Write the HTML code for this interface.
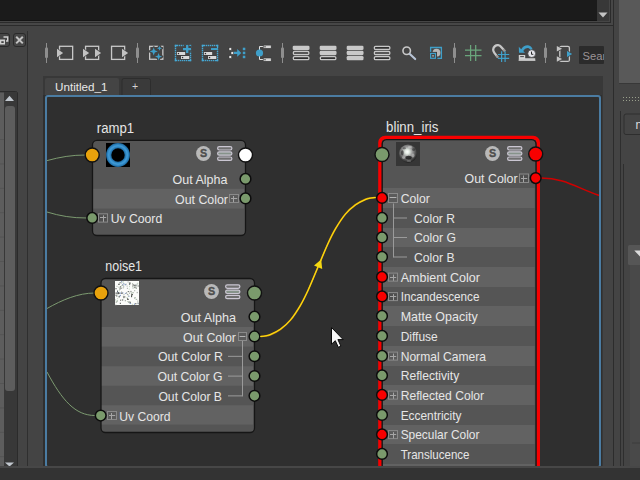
<!DOCTYPE html>
<html><head><meta charset="utf-8"><title>Node Editor</title>
<style>html,body{margin:0;padding:0;background:#444444;overflow:hidden}svg{display:block;font-family:"Liberation Sans",sans-serif}text{white-space:pre}</style></head><body>
<svg width="640" height="480" viewBox="0 0 640 480">
<rect width="640" height="480" fill="#444444"/>
<rect x="0" y="0" width="597" height="21" fill="#1b1b1b"/>
<rect x="597" y="0" width="12" height="21" fill="#383838"/>
<rect x="0" y="20" width="597" height="1" fill="#151515"/>
<path d="M598.5 12.5H607.5L603 17.5Z" fill="#c4c4c4"/>
<rect x="611" y="0" width="2" height="25" fill="#474747"/>
<rect x="0" y="23" width="613" height="2" fill="#474747"/>
<rect x="610" y="0" width="1" height="23" fill="#2b2b2b"/>
<rect x="0" y="22" width="611" height="1" fill="#2b2b2b"/>
<rect x="609" y="0" width="1" height="22" fill="#464646"/>
<rect x="0" y="21" width="610" height="1" fill="#464646"/>
<rect x="0" y="25" width="614" height="1" fill="#2b2b2b"/>
<rect x="613" y="0" width="1" height="466" fill="#2c2c2c"/>
<rect x="619" y="0" width="21" height="83" fill="#595959"/>
<rect x="619" y="83" width="21" height="1" fill="#383838"/>
<rect x="623" y="97" width="1" height="1" fill="#9aa08c"/>
<rect x="626" y="97" width="1" height="1" fill="#9aa08c"/>
<rect x="629" y="97" width="1" height="1" fill="#9aa08c"/>
<rect x="632" y="97" width="1" height="1" fill="#9aa08c"/>
<rect x="635" y="97" width="1" height="1" fill="#9aa08c"/>
<rect x="638" y="97" width="1" height="1" fill="#9aa08c"/>
<rect x="623" y="100" width="1" height="1" fill="#9aa08c"/>
<rect x="626" y="100" width="1" height="1" fill="#9aa08c"/>
<rect x="629" y="100" width="1" height="1" fill="#9aa08c"/>
<rect x="632" y="100" width="1" height="1" fill="#9aa08c"/>
<rect x="635" y="100" width="1" height="1" fill="#9aa08c"/>
<rect x="638" y="100" width="1" height="1" fill="#9aa08c"/>
<rect x="620" y="111" width="1" height="355" fill="#2e2e2e"/>
<rect x="623" y="164" width="1" height="302" fill="#2e2e2e"/>
<rect x="630" y="262" width="10" height="204" fill="#494949"/>
<path d="M624.5 640V116.5Q624.5 114.5 626.5 114.5H640" fill="none"/>
<rect x="624" y="114" width="20" height="20.5" rx="2" fill="#444" stroke="#2e2e2e" stroke-width="1"/>
<text x="635.5" y="129" font-size="12" fill="#ddd" text-anchor="start">n</text>
<rect x="628" y="245" width="16" height="20" rx="1.5" fill="#565656"/>
<path d="M634.3 250.6H642V258.6Z" fill="#dcdcdc"/>
<rect x="632" y="442.5" width="8" height="1" fill="#3c3c3c"/>
<rect x="27" y="31" width="1" height="435" fill="#2f2f2f"/>
<rect x="-3.5" y="33.5" width="13" height="13" rx="2.5" fill="#464646" stroke="#2a2a2a" stroke-width="1"/>
<rect x="13.5" y="33.5" width="12" height="13" rx="2.5" fill="#464646" stroke="#2a2a2a" stroke-width="1"/>
<path d="M16.2 36.8L22.8 43.4M22.8 36.8L16.2 43.4" stroke="#c2c2c2" stroke-width="2" fill="none"/>
<path d="M3.5 37H7.7V41H6" stroke="#d0d0d0" stroke-width="1.4" fill="none"/>
<rect x="0" y="39.5" width="5" height="5" fill="#d0d0d0"/>
<rect x="1.3" y="41.3" width="2.4" height="1.6" fill="#333"/>
<path d="M0 91.5H15.5Q17.5 91.5 17.5 93.5V466" fill="#383838" stroke="#2b2b2b" stroke-width="1"/>
<rect x="0" y="92" width="17" height="374" fill="#383838"/>
<rect x="17" y="93" width="1" height="373" fill="#2b2b2b"/>
<rect x="0" y="92.5" width="4" height="373.5" fill="#5d5d5d"/>
<rect x="0" y="139.0" width="4" height="1" fill="#545454"/>
<rect x="0" y="163.4" width="4" height="1" fill="#545454"/>
<rect x="0" y="187.8" width="4" height="1" fill="#545454"/>
<rect x="0" y="212.2" width="4" height="1" fill="#545454"/>
<rect x="0" y="236.6" width="4" height="1" fill="#545454"/>
<rect x="0" y="261.0" width="4" height="1" fill="#545454"/>
<rect x="0" y="285.4" width="4" height="1" fill="#545454"/>
<rect x="0" y="309.8" width="4" height="1" fill="#545454"/>
<rect x="0" y="334.2" width="4" height="1" fill="#545454"/>
<rect x="0" y="358.6" width="4" height="1" fill="#545454"/>
<rect x="0" y="383.0" width="4" height="1" fill="#545454"/>
<rect x="0" y="407.4" width="4" height="1" fill="#545454"/>
<rect x="0" y="431.8" width="4" height="1" fill="#545454"/>
<rect x="0" y="456.2" width="4" height="1" fill="#545454"/>
<path d="M5 101L9.5 95.8L14 101Z" fill="#c2c8cf"/>
<rect x="5" y="106" width="10" height="285" rx="3" fill="#5d5d5d"/>
<path d="M5 462.5H14L9.5 466.5Z" fill="#c2c8cf"/>
<rect x="46.0" y="43" width="1" height="20" fill="#8e8e8e"/>
<rect x="45.0" y="47.5" width="3" height="10.5" rx="1" fill="#8e8e8e"/>
<rect x="137.0" y="43" width="1" height="20" fill="#8e8e8e"/>
<rect x="136.0" y="47.5" width="3" height="10.5" rx="1" fill="#8e8e8e"/>
<rect x="282.0" y="43" width="1" height="20" fill="#8e8e8e"/>
<rect x="281.0" y="47.5" width="3" height="10.5" rx="1" fill="#8e8e8e"/>
<rect x="454.0" y="43" width="1" height="20" fill="#8e8e8e"/>
<rect x="453.0" y="47.5" width="3" height="10.5" rx="1" fill="#8e8e8e"/>
<rect x="545.0" y="43" width="1" height="20" fill="#8e8e8e"/>
<rect x="544.0" y="47.5" width="3" height="10.5" rx="1" fill="#8e8e8e"/>
<rect x="59.55" y="46.3" width="13.1" height="13.1" fill="none" stroke="#c8c8c8" stroke-width="1.3"/>
<path d="M55.8 47.199999999999996L64.7 53L55.8 58.800000000000004Z" fill="#444444"/>
<path d="M57 48.8L63.1 53L57 57.2Z" fill="#c2c2c2"/>
<rect x="85.55" y="46.3" width="13.1" height="13.1" fill="none" stroke="#c8c8c8" stroke-width="1.3"/>
<path d="M81.8 47.199999999999996L90.69999999999999 53L81.8 58.800000000000004Z" fill="#444444"/>
<path d="M83 48.8L89.1 53L83 57.2Z" fill="#c2c2c2"/>
<path d="M93.8 47.199999999999996L102.69999999999999 53L93.8 58.800000000000004Z" fill="#444444"/>
<path d="M95 48.8L101.1 53L95 57.2Z" fill="#c2c2c2"/>
<rect x="111.55" y="46.3" width="13.1" height="13.1" fill="none" stroke="#c8c8c8" stroke-width="1.3"/>
<path d="M120.8 47.199999999999996L129.7 53L120.8 58.800000000000004Z" fill="#444444"/>
<path d="M122 48.8L128.1 53L122 57.2Z" fill="#c2c2c2"/>
<rect x="149.65" y="46.35" width="13.2" height="12.9" fill="none" stroke="#c8c8c8" stroke-width="1.3"/>
<path d="M153.7 47.4L154.78 50.32L157.7 51.4L154.78 52.48L153.7 55.4L152.61999999999998 52.48L149.7 51.4L152.61999999999998 50.32Z" fill="#444444" stroke="#444444" stroke-width="2.4" stroke-linejoin="round"/>
<path d="M153.7 47.4L154.78 50.32L157.7 51.4L154.78 52.48L153.7 55.4L152.61999999999998 52.48L149.7 51.4L152.61999999999998 50.32Z" fill="#3f9fc9"/>
<path d="M159.5 45.7L160.175 47.525000000000006L162.0 48.2L160.175 48.875L159.5 50.7L158.825 48.875L157.0 48.2L158.825 47.525000000000006Z" fill="#444444" stroke="#444444" stroke-width="2.4" stroke-linejoin="round"/>
<path d="M159.5 45.7L160.175 47.525000000000006L162.0 48.2L160.175 48.875L159.5 50.7L158.825 48.875L157.0 48.2L158.825 47.525000000000006Z" fill="#3f9fc9"/>
<path d="M158.6 53.0L159.572 55.628L162.2 56.6L159.572 57.572L158.6 60.2L157.628 57.572L155.0 56.6L157.628 55.628Z" fill="#444444" stroke="#444444" stroke-width="2.4" stroke-linejoin="round"/>
<path d="M158.6 53.0L159.572 55.628L162.2 56.6L159.572 57.572L158.6 60.2L157.628 57.572L155.0 56.6L157.628 55.628Z" fill="#3f9fc9"/>
<rect x="174.8" y="44.8" width="2.4" height="1.4" fill="#45a8d4"/>
<rect x="174.8" y="44.8" width="1.4" height="2.4" fill="#45a8d4"/>
<rect x="188.8" y="44.8" width="2.4" height="1.4" fill="#45a8d4"/>
<rect x="189.8" y="44.8" width="1.4" height="2.4" fill="#45a8d4"/>
<rect x="174.8" y="59.8" width="2.4" height="1.4" fill="#45a8d4"/>
<rect x="174.8" y="58.8" width="1.4" height="2.4" fill="#45a8d4"/>
<rect x="188.8" y="59.8" width="2.4" height="1.4" fill="#45a8d4"/>
<rect x="189.8" y="58.8" width="1.4" height="2.4" fill="#45a8d4"/>
<rect x="176.8" y="44.8" width="1.4" height="1.4" fill="#45a8d4"/>
<rect x="177.8" y="59.8" width="1.4" height="1.4" fill="#45a8d4"/>
<rect x="174.8" y="47.8" width="1.4" height="1.4" fill="#45a8d4"/>
<rect x="189.8" y="46.8" width="1.4" height="1.4" fill="#45a8d4"/>
<rect x="178.8" y="44.8" width="1.4" height="1.4" fill="#45a8d4"/>
<rect x="179.8" y="59.8" width="1.4" height="1.4" fill="#45a8d4"/>
<rect x="174.8" y="49.8" width="1.4" height="1.4" fill="#45a8d4"/>
<rect x="189.8" y="48.8" width="1.4" height="1.4" fill="#45a8d4"/>
<rect x="180.8" y="44.8" width="1.4" height="1.4" fill="#45a8d4"/>
<rect x="181.8" y="59.8" width="1.4" height="1.4" fill="#45a8d4"/>
<rect x="174.8" y="51.8" width="1.4" height="1.4" fill="#45a8d4"/>
<rect x="189.8" y="50.8" width="1.4" height="1.4" fill="#45a8d4"/>
<rect x="182.8" y="44.8" width="1.4" height="1.4" fill="#45a8d4"/>
<rect x="183.8" y="59.8" width="1.4" height="1.4" fill="#45a8d4"/>
<rect x="174.8" y="53.8" width="1.4" height="1.4" fill="#45a8d4"/>
<rect x="189.8" y="52.8" width="1.4" height="1.4" fill="#45a8d4"/>
<rect x="184.8" y="44.8" width="1.4" height="1.4" fill="#45a8d4"/>
<rect x="185.8" y="59.8" width="1.4" height="1.4" fill="#45a8d4"/>
<rect x="174.8" y="55.8" width="1.4" height="1.4" fill="#45a8d4"/>
<rect x="189.8" y="54.8" width="1.4" height="1.4" fill="#45a8d4"/>
<rect x="186.8" y="44.8" width="1.4" height="1.4" fill="#45a8d4"/>
<rect x="187.8" y="59.8" width="1.4" height="1.4" fill="#45a8d4"/>
<rect x="174.8" y="57.8" width="1.4" height="1.4" fill="#45a8d4"/>
<rect x="189.8" y="56.8" width="1.4" height="1.4" fill="#45a8d4"/>
<rect x="176.4" y="51.5" width="9.3" height="4" fill="#3a3a3a"/>
<rect x="180.5" y="55.5" width="9.3" height="4" fill="#3a3a3a"/>
<rect x="176.9" y="52" width="8.3" height="3" fill="#d8d8d8"/>
<rect x="177.8" y="52.9" width="1.3" height="1.3" fill="#2c2c2c"/>
<rect x="181" y="56" width="8.3" height="3" fill="#d8d8d8"/>
<rect x="181.9" y="56.9" width="1.3" height="1.3" fill="#2c2c2c"/>
<rect x="183.7" y="44.5" width="7.8" height="7.3" fill="#444444"/>
<path d="M183 49.05H191M187.2 45V53" stroke="#3f9fc9" stroke-width="2.3" fill="none"/>
<rect x="189.3" y="45" width="1.7" height="1" fill="#3f9fc9"/>
<rect x="201.8" y="44.8" width="2.4" height="1.4" fill="#45a8d4"/>
<rect x="201.8" y="44.8" width="1.4" height="2.4" fill="#45a8d4"/>
<rect x="215.8" y="44.8" width="2.4" height="1.4" fill="#45a8d4"/>
<rect x="216.8" y="44.8" width="1.4" height="2.4" fill="#45a8d4"/>
<rect x="201.8" y="59.8" width="2.4" height="1.4" fill="#45a8d4"/>
<rect x="201.8" y="58.8" width="1.4" height="2.4" fill="#45a8d4"/>
<rect x="215.8" y="59.8" width="2.4" height="1.4" fill="#45a8d4"/>
<rect x="216.8" y="58.8" width="1.4" height="2.4" fill="#45a8d4"/>
<rect x="203.8" y="44.8" width="1.4" height="1.4" fill="#45a8d4"/>
<rect x="204.8" y="59.8" width="1.4" height="1.4" fill="#45a8d4"/>
<rect x="201.8" y="47.8" width="1.4" height="1.4" fill="#45a8d4"/>
<rect x="216.8" y="46.8" width="1.4" height="1.4" fill="#45a8d4"/>
<rect x="205.8" y="44.8" width="1.4" height="1.4" fill="#45a8d4"/>
<rect x="206.8" y="59.8" width="1.4" height="1.4" fill="#45a8d4"/>
<rect x="201.8" y="49.8" width="1.4" height="1.4" fill="#45a8d4"/>
<rect x="216.8" y="48.8" width="1.4" height="1.4" fill="#45a8d4"/>
<rect x="207.8" y="44.8" width="1.4" height="1.4" fill="#45a8d4"/>
<rect x="208.8" y="59.8" width="1.4" height="1.4" fill="#45a8d4"/>
<rect x="201.8" y="51.8" width="1.4" height="1.4" fill="#45a8d4"/>
<rect x="216.8" y="50.8" width="1.4" height="1.4" fill="#45a8d4"/>
<rect x="209.8" y="44.8" width="1.4" height="1.4" fill="#45a8d4"/>
<rect x="210.8" y="59.8" width="1.4" height="1.4" fill="#45a8d4"/>
<rect x="201.8" y="53.8" width="1.4" height="1.4" fill="#45a8d4"/>
<rect x="216.8" y="52.8" width="1.4" height="1.4" fill="#45a8d4"/>
<rect x="211.8" y="44.8" width="1.4" height="1.4" fill="#45a8d4"/>
<rect x="212.8" y="59.8" width="1.4" height="1.4" fill="#45a8d4"/>
<rect x="201.8" y="55.8" width="1.4" height="1.4" fill="#45a8d4"/>
<rect x="216.8" y="54.8" width="1.4" height="1.4" fill="#45a8d4"/>
<rect x="213.8" y="44.8" width="1.4" height="1.4" fill="#45a8d4"/>
<rect x="214.8" y="59.8" width="1.4" height="1.4" fill="#45a8d4"/>
<rect x="201.8" y="57.8" width="1.4" height="1.4" fill="#45a8d4"/>
<rect x="216.8" y="56.8" width="1.4" height="1.4" fill="#45a8d4"/>
<rect x="203.4" y="51.5" width="9.3" height="4" fill="#3a3a3a"/>
<rect x="207.5" y="55.5" width="9.3" height="4" fill="#3a3a3a"/>
<rect x="203.9" y="52" width="8.3" height="3" fill="#d8d8d8"/>
<rect x="204.8" y="52.9" width="1.3" height="1.3" fill="#2c2c2c"/>
<rect x="208" y="56" width="8.3" height="3" fill="#d8d8d8"/>
<rect x="208.9" y="56.9" width="1.3" height="1.3" fill="#2c2c2c"/>
<rect x="210" y="47.3" width="7" height="3.5" fill="#444444"/>
<path d="M211 49.05H218" stroke="#3f9fc9" stroke-width="2" fill="none"/>
<rect x="229" y="47.7" width="2.6" height="2.6" fill="#e4e4e4" stroke="#333" stroke-width="0.5"/>
<rect x="231" y="51.7" width="2.6" height="2.6" fill="#e4e4e4" stroke="#333" stroke-width="0.5"/>
<rect x="229" y="55.7" width="2.6" height="2.6" fill="#e4e4e4" stroke="#333" stroke-width="0.5"/>
<rect x="242.8" y="47.7" width="2.5" height="2.5" fill="#3f9fc9"/>
<rect x="242.8" y="51.7" width="2.5" height="2.5" fill="#3f9fc9"/>
<rect x="242.8" y="55.7" width="2.5" height="2.5" fill="#3f9fc9"/>
<path d="M233.8 51.8H237.2V49L241.3 52.9L237.2 56.8V54H233.8Z" fill="#3f9fc9"/>
<path d="M263.5 46.5H259.5V59.5H263.5" stroke="#e0e0e0" stroke-width="1" fill="none"/>
<circle cx="259.5" cy="53" r="3.6" fill="#3f9fc9"/>
<rect x="263.2" y="45.1" width="8" height="3.3" fill="#d6d6d6" stroke="#333" stroke-width="0.6"/>
<rect x="264.4" y="46.199999999999996" width="1.2" height="1.2" fill="#333"/>
<rect x="263.2" y="58.0" width="8" height="3.3" fill="#d6d6d6" stroke="#333" stroke-width="0.6"/>
<rect x="264.4" y="59.099999999999994" width="1.2" height="1.2" fill="#333"/>
<rect x="292.7" y="45.7" width="16.8" height="4.3" rx="1.3" fill="#c8c8c8"/>
<rect x="293.35" y="51.5" width="15.5" height="3" rx="1.2" fill="#303030" stroke="#c8c8c8" stroke-width="1.3"/>
<rect x="293.35" y="56.65" width="15.5" height="3" rx="1.2" fill="#303030" stroke="#c8c8c8" stroke-width="1.3"/>
<rect x="319.7" y="45.7" width="16.8" height="4.3" rx="1.3" fill="#c8c8c8"/>
<rect x="319.7" y="50.85" width="16.8" height="4.3" rx="1.3" fill="#c8c8c8"/>
<rect x="320.35" y="56.65" width="15.5" height="3" rx="1.2" fill="#303030" stroke="#c8c8c8" stroke-width="1.3"/>
<rect x="346.7" y="45.7" width="16.8" height="4.3" rx="1.3" fill="#c8c8c8"/>
<rect x="346.7" y="50.85" width="16.8" height="4.3" rx="1.3" fill="#c8c8c8"/>
<rect x="346.7" y="56.0" width="16.8" height="4.3" rx="1.3" fill="#c8c8c8"/>
<rect x="374.35" y="46.35" width="15.5" height="3" rx="1.2" fill="#303030" stroke="#c8c8c8" stroke-width="1.3"/>
<rect x="374.35" y="51.5" width="15.5" height="3" rx="1.2" fill="#303030" stroke="#c8c8c8" stroke-width="1.3"/>
<rect x="374.35" y="56.65" width="15.5" height="3" rx="1.2" fill="#303030" stroke="#c8c8c8" stroke-width="1.3"/>
<circle cx="406.7" cy="50.7" r="3.75" fill="none" stroke="#c8c8c8" stroke-width="1.6"/>
<path d="M409.8 53.9L415.2 59.1" stroke="#b8c4d6" stroke-width="2.1" stroke-linecap="round" fill="none"/>
<path d="M437.4 58.3H441.4V47.5H430.6V52.6" fill="none" stroke="#3f9fc9" stroke-width="1.3"/>
<circle cx="436.5" cy="52.7" r="3.9" fill="#b6b6b6"/>
<rect x="429.9" y="51.9" width="7.1" height="7.1" fill="#3a3a3a"/>
<rect x="430.6" y="53.4" width="4.9" height="4.9" fill="#444444" stroke="#3f9fc9" stroke-width="1.2"/>
<rect x="432.3" y="55.1" width="1.5" height="1.5" fill="#b4b4b4"/>
<path d="M470.6 45V61M475.7 45V61M465 50.1H481.5M465 55.6H481.5" stroke="#6aa67c" stroke-width="1.25" fill="none"/>
<path d="M498 57.6L494.2 52.6A4.5 4.5 0 0 1 501.2 46.9L505 51.2" stroke="#c6c6c6" stroke-width="2.3" fill="none"/>
<path d="M496.3 55.4L498 57.6M503.3 49.3L505 51.2" stroke="#777" stroke-width="2.3" fill="none" opacity="0.55"/>
<path d="M501.6 51.3V62M505.1 51.3V62M498 54.5H509.2M498 58.4H509.2" stroke="#3f9fc9" stroke-width="1.2" fill="none"/>
<path d="M518.8 55H525.2V58.2H535.2V61H518.8Z" fill="#d2d2d2"/>
<rect x="520.2" y="56.2" width="3.7" height="0.9" fill="#3a3a3a"/>
<rect x="518.8" y="59.6" width="16.4" height="1.4" fill="#bdbdbd"/>
<path d="M518.8 46.8L519 52.8H525L523.2 51Q525 47.6 528.3 48.1Q530 48.6 530.6 50.6L532.6 49.2Q531.5 45.6 528 45.2Q523.6 45 521.2 49.2Z" fill="#3f9fc9"/>
<circle cx="531.7" cy="53.6" r="3.9" fill="#e4e4ea" stroke="#3c3c3c" stroke-width="0.7"/>
<path d="M531.5 51.6V54.3H533.3" stroke="#2a2a2a" stroke-width="1" fill="none"/>
<rect x="559.8" y="46.3" width="9.6" height="15.1" rx="1.5" fill="none" stroke="#c8c8c8" stroke-width="1.3"/>
<rect x="556" y="50.5" width="6" height="6" fill="#444444" opacity="0"/>
<path d="M555.5999999999999 44.4L563.6999999999999 48.7L555.5999999999999 53.00000000000001Z" fill="#444444"/>
<path d="M556.8 46.0L562.0999999999999 48.7L556.8 51.400000000000006Z" fill="#c4c4c4"/>
<path d="M555.5999999999999 54.699999999999996L563.6999999999999 59L555.5999999999999 63.300000000000004Z" fill="#444444"/>
<path d="M556.8 56.3L562.0999999999999 59L556.8 61.7Z" fill="#c4c4c4"/>
<path d="M565.8 49.4L573.8000000000001 54L565.8 58.6Z" fill="#444444"/>
<path d="M567 51L572.2 54L567 57Z" fill="#3f9fc9"/>
<rect x="579" y="46" width="25" height="18" rx="1" fill="#2b2b2b"/>
<svg x="579" y="46" width="25" height="18" viewBox="579 46 25 18">
<text x="582.6" y="60.1" font-size="11.2" fill="#9c9497" text-anchor="start">Search</text>
</svg>
<rect x="43" y="76" width="560" height="390" fill="#383838"/>
<path d="M45 96V80Q45 78 47 78H117Q119 78 119 80V96Z" fill="#444"/>
<path d="M122 96V80.5Q122 78.5 124 78.5H148.5Q150.5 78.5 150.5 80.5V96" fill="#3a3a3a" stroke="#2d2d2d" stroke-width="1"/>
<text x="55" y="91" font-size="11.5" fill="#e8e8e8" text-anchor="start" textLength="52.5" lengthAdjust="spacingAndGlyphs">Untitled_1</text>
<text x="135" y="90" font-size="10.5" fill="#d4d4d4" text-anchor="middle">+</text>
<rect x="43" y="95" width="559" height="371" fill="#2f2f2f"/>
<rect x="46" y="96" width="554" height="371" rx="2" fill="#2f2f2f" stroke="#4b7ca2" stroke-width="2"/>
<clipPath id="cv"><rect x="47" y="97" width="552" height="369"/></clipPath>
<g clip-path="url(#cv)">
<path d="M47 160.6C60 157 72 155 86 155" stroke="#7c9a70" stroke-width="1" fill="none"/>
<path d="M47 212C60 216 72 218 87 218" stroke="#7c9a70" stroke-width="1" fill="none"/>
<path d="M47 308.5C62 300 78 293 95 293" stroke="#7c9a70" stroke-width="1" fill="none"/>
<path d="M47 372C62 400 75 415.5 95 415.5" stroke="#7c9a70" stroke-width="1" fill="none"/>
<text x="96.8" y="132.6" font-size="14" fill="#e6e6e6" text-anchor="start" textLength="37.2" lengthAdjust="spacingAndGlyphs">ramp1</text>
<clipPath id="c92"><rect x="92.5" y="140.3" width="153.0" height="95.19999999999999" rx="4.5"/></clipPath>
<g clip-path="url(#c92)">
<rect x="92.5" y="140.3" width="153.0" height="95.19999999999999" fill="#555555"/>
<rect x="92.5" y="188.8" width="151.7" height="19.799999999999983" fill="#626262"/>
</g>
<rect x="92.5" y="140.3" width="153.0" height="95.19999999999999" rx="4.5" fill="none" stroke="#161616" stroke-width="1.3"/>
<rect x="106" y="143" width="24" height="24" fill="#000"/>
<circle cx="118" cy="155" r="9.3" fill="none" stroke="#2270a8" stroke-width="5.2"/>
<circle cx="118" cy="155" r="9.3" fill="none" stroke="#2f86c2" stroke-width="3.4"/>
<circle cx="118" cy="155" r="9.3" fill="none" stroke="#3f98d4" stroke-width="1.6"/>
<circle cx="203.5" cy="153.5" r="7.4" fill="#b9b9b9"/>
<text x="203.5" y="157.2" font-size="10.8" font-weight="bold" fill="#4e4e4e" stroke="#4e4e4e" stroke-width="0.35" text-anchor="middle">S</text>
<rect x="217.6" y="146.6" width="14.3" height="3.4" rx="1.7" fill="#6f6f6f" stroke="#cac6d2" stroke-width="1.2"/>
<rect x="217.6" y="151.79999999999998" width="14.3" height="3.4" rx="1.7" fill="#86938a" stroke="#cac6d2" stroke-width="1.2"/>
<rect x="217.6" y="157.0" width="14.3" height="3.4" rx="1.7" fill="#6f6f6f" stroke="#cac6d2" stroke-width="1.2"/>
<circle cx="92.2" cy="155" r="7" fill="#e8a20c" stroke="#111" stroke-width="1.4"/>
<circle cx="245.5" cy="155" r="7" fill="#ffffff" stroke="#111" stroke-width="1.4"/>
<text x="227.5" y="184" font-size="13" fill="#e6e6e6" text-anchor="end" textLength="55" lengthAdjust="spacingAndGlyphs">Out Alpha</text>
<circle cx="245.5" cy="178.9" r="5.35" fill="#7a9a6c" stroke="#0c0c0c" stroke-width="1.5"/>
<text x="228" y="203.7" font-size="13" fill="#e6e6e6" text-anchor="end" textLength="53" lengthAdjust="spacingAndGlyphs">Out Color</text>
<rect x="229.5" y="194.5" width="9" height="8" fill="#000" fill-opacity="0.07" stroke="#8a8a8a" stroke-width="1"/>
<path d="M231 198.5H237.2M233.5 196V202.2" stroke="#a6a6a6" stroke-width="1" fill="none"/>
<circle cx="245.5" cy="198.4" r="5.35" fill="#7a9a6c" stroke="#0c0c0c" stroke-width="1.5"/>
<circle cx="92.2" cy="217.9" r="5.35" fill="#7a9a6c" stroke="#0c0c0c" stroke-width="1.5"/>
<rect x="98.5" y="213.8" width="9" height="8.3" fill="#000" fill-opacity="0.07" stroke="#8a8a8a" stroke-width="1"/>
<path d="M100 217.5H106.2M103.5 215.3V221.8" stroke="#a6a6a6" stroke-width="1" fill="none"/>
<text x="110.7" y="223.3" font-size="13" fill="#e6e6e6" text-anchor="start" textLength="51.5" lengthAdjust="spacingAndGlyphs">Uv Coord</text>
<text x="105.3" y="271" font-size="14" fill="#e6e6e6" text-anchor="start" textLength="36.7" lengthAdjust="spacingAndGlyphs">noise1</text>
<clipPath id="c101"><rect x="101" y="278.5" width="153.5" height="154.0" rx="4.5"/></clipPath>
<g clip-path="url(#c101)">
<rect x="101" y="278.5" width="153.5" height="154.0" fill="#555555"/>
<rect x="101" y="327" width="152.2" height="19.600000000000023" fill="#626262"/>
<rect x="101" y="366.2" width="152.2" height="19.600000000000023" fill="#626262"/>
<rect x="101" y="405.2" width="152.2" height="19.400000000000034" fill="#626262"/>
</g>
<rect x="101" y="278.5" width="153.5" height="154.0" rx="4.5" fill="none" stroke="#161616" stroke-width="1.3"/>
<rect x="115" y="281" width="24" height="24" fill="#fbfcfa"/>
<rect x="122.4" y="284.5" width="1" height="1.3" fill="#6a706a"/>
<rect x="117.2" y="294.4" width="1" height="1" fill="#a8b4a8"/>
<rect x="117.0" y="290.6" width="1" height="1.3" fill="#505450"/>
<rect x="124.8" y="300.0" width="1" height="1.3" fill="#9aa09a"/>
<rect x="129.4" y="302.8" width="1" height="1" fill="#d0d8d0"/>
<rect x="116.1" y="300.7" width="1.5" height="1" fill="#c4d8c0"/>
<rect x="127.4" y="294.1" width="1" height="1" fill="#a8b4a8"/>
<rect x="128.4" y="295.7" width="1" height="1.3" fill="#8aa0c8"/>
<rect x="131.4" y="294.0" width="1.5" height="1.3" fill="#505450"/>
<rect x="127.2" y="298.9" width="1.5" height="1" fill="#3c403c"/>
<rect x="121.9" y="299.3" width="1" height="1.3" fill="#505450"/>
<rect x="121.9" y="292.4" width="1.5" height="1" fill="#8aa0c8"/>
<rect x="129.0" y="282.7" width="1.5" height="1" fill="#a8b4a8"/>
<rect x="132.4" y="284.5" width="1.5" height="1" fill="#3c403c"/>
<rect x="137.1" y="282.8" width="1" height="1" fill="#a8b4a8"/>
<rect x="131.0" y="294.7" width="1" height="1" fill="#3c403c"/>
<rect x="136.7" y="291.9" width="1" height="1.3" fill="#9aa09a"/>
<rect x="131.1" y="295.9" width="1" height="1.3" fill="#3c403c"/>
<rect x="123.9" y="296.4" width="1.5" height="1" fill="#6a706a"/>
<rect x="118.9" y="283.7" width="1" height="1" fill="#6a706a"/>
<rect x="118.0" y="286.7" width="1.5" height="1" fill="#d0d8d0"/>
<rect x="118.8" y="290.2" width="1" height="1" fill="#c4d8c0"/>
<rect x="134.9" y="287.4" width="1" height="1.3" fill="#d0d8d0"/>
<rect x="135.3" y="303.0" width="1" height="1" fill="#b4bcb2"/>
<rect x="118.5" y="296.1" width="1.5" height="1.3" fill="#6a706a"/>
<rect x="119.2" y="287.5" width="1.5" height="1.3" fill="#b4bcb2"/>
<rect x="123.5" y="294.0" width="1" height="1" fill="#b4bcb2"/>
<rect x="135.7" y="298.9" width="1.5" height="1" fill="#a8b4a8"/>
<rect x="124.2" y="283.4" width="1" height="1" fill="#d0d8d0"/>
<rect x="116.5" y="285.8" width="1" height="1" fill="#b4bcb2"/>
<rect x="128.8" y="283.4" width="1" height="1" fill="#b4bcb2"/>
<rect x="129.1" y="282.6" width="1.5" height="1" fill="#505450"/>
<rect x="129.6" y="303.0" width="1.5" height="1" fill="#8aa0c8"/>
<rect x="117.7" y="292.2" width="1.5" height="1" fill="#3c403c"/>
<rect x="122.2" y="284.3" width="1" height="1" fill="#8aa0c8"/>
<rect x="134.1" y="284.7" width="1" height="1.3" fill="#6a706a"/>
<rect x="123.3" y="296.9" width="1" height="1.3" fill="#6a706a"/>
<rect x="134.9" y="297.0" width="1" height="1" fill="#c4d8c0"/>
<rect x="123.2" y="286.1" width="1" height="1.3" fill="#a8b4a8"/>
<rect x="120.1" y="299.7" width="1" height="1" fill="#505450"/>
<rect x="132.0" y="286.2" width="1.5" height="1" fill="#a8b4a8"/>
<rect x="131.8" y="303.8" width="1.5" height="1" fill="#c4d8c0"/>
<rect x="119.5" y="294.9" width="1.5" height="1.3" fill="#8aa0c8"/>
<rect x="137.7" y="303.0" width="1" height="1" fill="#8aa0c8"/>
<rect x="117.3" y="291.8" width="1" height="1" fill="#8aa0c8"/>
<rect x="129.4" y="301.7" width="1.5" height="1.3" fill="#6a706a"/>
<rect x="122.9" y="295.8" width="1.5" height="1.3" fill="#9aa09a"/>
<rect x="132.3" y="292.0" width="1.5" height="1.3" fill="#b4bcb2"/>
<rect x="122.6" y="299.4" width="1.5" height="1" fill="#d0d8d0"/>
<rect x="132.1" y="283.0" width="1" height="1" fill="#b4bcb2"/>
<rect x="115.6" y="294.6" width="1" height="1.3" fill="#3c403c"/>
<rect x="134.0" y="303.5" width="1" height="1.3" fill="#8aa0c8"/>
<rect x="127.6" y="281.5" width="1" height="1" fill="#9aa09a"/>
<rect x="137.7" y="285.5" width="1" height="1" fill="#505450"/>
<rect x="119.9" y="292.5" width="1" height="1.3" fill="#8aa0c8"/>
<rect x="124.6" y="284.0" width="1.5" height="1.3" fill="#8aa0c8"/>
<rect x="128.4" y="301.8" width="1" height="1.3" fill="#d0d8d0"/>
<rect x="118.5" y="292.7" width="1" height="1.3" fill="#3c403c"/>
<rect x="115.1" y="299.4" width="1" height="1" fill="#b4bcb2"/>
<rect x="129.2" y="283.8" width="1" height="1.3" fill="#6a706a"/>
<rect x="126.9" y="293.8" width="1" height="1" fill="#9aa09a"/>
<rect x="119.4" y="282.0" width="1.5" height="1.3" fill="#9aa09a"/>
<rect x="115.6" y="301.6" width="1.5" height="1" fill="#9aa09a"/>
<rect x="129.1" y="292.6" width="1" height="1.3" fill="#a8b4a8"/>
<rect x="121.4" y="292.7" width="1" height="1.3" fill="#3c403c"/>
<rect x="127.0" y="301.1" width="1" height="1" fill="#c4d8c0"/>
<rect x="118.2" y="283.8" width="1" height="1" fill="#3c403c"/>
<rect x="130.4" y="290.9" width="1" height="1" fill="#505450"/>
<rect x="135.6" y="284.6" width="1" height="1" fill="#8aa0c8"/>
<rect x="135.3" y="303.3" width="1" height="1" fill="#505450"/>
<rect x="135.4" y="284.7" width="1" height="1.3" fill="#505450"/>
<rect x="124.9" y="292.9" width="1.5" height="1" fill="#8aa0c8"/>
<rect x="123.2" y="283.1" width="1" height="1" fill="#8aa0c8"/>
<rect x="127.7" y="291.1" width="1.5" height="1" fill="#6a706a"/>
<rect x="126.9" y="287.8" width="1" height="1" fill="#9aa09a"/>
<rect x="137.3" y="283.4" width="1" height="1" fill="#c4d8c0"/>
<rect x="135.8" y="285.2" width="1.5" height="1.3" fill="#b4bcb2"/>
<rect x="133.8" y="286.9" width="1.5" height="1.3" fill="#b4bcb2"/>
<rect x="122.5" y="287.4" width="1.5" height="1" fill="#b4bcb2"/>
<rect x="121.2" y="281.4" width="1" height="1" fill="#9aa09a"/>
<rect x="129.0" y="286.1" width="1" height="1" fill="#c4d8c0"/>
<rect x="115.3" y="303.9" width="1" height="1.3" fill="#d0d8d0"/>
<rect x="118.0" y="293.1" width="1" height="1" fill="#505450"/>
<rect x="121.0" y="285.2" width="1" height="1.3" fill="#c4d8c0"/>
<rect x="132.5" y="287.7" width="1" height="1" fill="#a8b4a8"/>
<rect x="123.0" y="281.4" width="1" height="1" fill="#c4d8c0"/>
<rect x="115.4" y="292.6" width="1.5" height="1" fill="#505450"/>
<rect x="136.5" y="283.4" width="1.5" height="1.3" fill="#d0d8d0"/>
<rect x="134.2" y="290.0" width="1" height="1.3" fill="#a8b4a8"/>
<rect x="119.9" y="286.3" width="1" height="1" fill="#505450"/>
<rect x="137.8" y="303.6" width="1" height="1" fill="#b4bcb2"/>
<rect x="129.4" y="301.2" width="1" height="1" fill="#d0d8d0"/>
<rect x="116.9" y="300.3" width="1" height="1.3" fill="#a8b4a8"/>
<rect x="120.6" y="287.7" width="1" height="1" fill="#3c403c"/>
<rect x="121.2" y="281.1" width="1" height="1.3" fill="#8aa0c8"/>
<rect x="122.4" y="281.8" width="1" height="1" fill="#c4d8c0"/>
<rect x="119.2" y="288.7" width="1.5" height="1" fill="#9aa09a"/>
<rect x="126.6" y="285.6" width="1" height="1" fill="#a8b4a8"/>
<rect x="121.1" y="283.1" width="1" height="1" fill="#d0d8d0"/>
<rect x="115.5" y="288.0" width="1" height="1.3" fill="#505450"/>
<rect x="137.0" y="300.6" width="1.5" height="1" fill="#b4bcb2"/>
<rect x="131.6" y="292.4" width="1" height="1" fill="#c4d8c0"/>
<rect x="134.0" y="297.4" width="1.5" height="1.3" fill="#a8b4a8"/>
<rect x="131.1" y="292.6" width="1" height="1.3" fill="#a8b4a8"/>
<rect x="128.4" y="301.5" width="1" height="1" fill="#505450"/>
<rect x="116.0" y="295.7" width="1.5" height="1" fill="#9aa09a"/>
<rect x="127.8" y="295.4" width="1" height="1" fill="#a8b4a8"/>
<rect x="121.1" y="291.5" width="1" height="1.3" fill="#9aa09a"/>
<rect x="127.1" y="298.2" width="1" height="1" fill="#3c403c"/>
<rect x="134.5" y="286.4" width="1" height="1.3" fill="#505450"/>
<rect x="129.9" y="291.6" width="1" height="1" fill="#d0d8d0"/>
<rect x="135.9" y="287.6" width="1" height="1" fill="#6a706a"/>
<rect x="128.8" y="288.6" width="1" height="1" fill="#c4d8c0"/>
<rect x="126.1" y="292.2" width="1" height="1.3" fill="#9aa09a"/>
<rect x="126.3" y="297.3" width="1.5" height="1" fill="#c4d8c0"/>
<rect x="125.7" y="283.7" width="1" height="1" fill="#a8b4a8"/>
<rect x="137.5" y="302.5" width="1" height="1" fill="#6a706a"/>
<rect x="116.8" y="292.7" width="1" height="1" fill="#3c403c"/>
<rect x="119.8" y="302.7" width="1" height="1.3" fill="#505450"/>
<rect x="117.1" y="298.2" width="1" height="1" fill="#c4d8c0"/>
<circle cx="211.5" cy="291.5" r="7.4" fill="#b9b9b9"/>
<text x="211.5" y="295.2" font-size="10.8" font-weight="bold" fill="#4e4e4e" stroke="#4e4e4e" stroke-width="0.35" text-anchor="middle">S</text>
<rect x="225.6" y="284.90000000000003" width="14.3" height="3.4" rx="1.7" fill="#6f6f6f" stroke="#cac6d2" stroke-width="1.2"/>
<rect x="225.6" y="290.1" width="14.3" height="3.4" rx="1.7" fill="#86938a" stroke="#cac6d2" stroke-width="1.2"/>
<rect x="225.6" y="295.3" width="14.3" height="3.4" rx="1.7" fill="#6f6f6f" stroke="#cac6d2" stroke-width="1.2"/>
<circle cx="101" cy="293" r="7" fill="#e8a20c" stroke="#111" stroke-width="1.4"/>
<circle cx="254.5" cy="293" r="7" fill="#7a9a6c" stroke="#111" stroke-width="1.4"/>
<text x="236" y="321.5" font-size="13" fill="#e6e6e6" text-anchor="end" textLength="55.3" lengthAdjust="spacingAndGlyphs">Out Alpha</text>
<circle cx="254.5" cy="316.7" r="5.35" fill="#7a9a6c" stroke="#0c0c0c" stroke-width="1.5"/>
<text x="236" y="341.6" font-size="13" fill="#e6e6e6" text-anchor="end" textLength="53" lengthAdjust="spacingAndGlyphs">Out Color</text>
<rect x="238.5" y="332.5" width="8" height="8" fill="#000" fill-opacity="0.07" stroke="#8a8a8a" stroke-width="1"/>
<path d="M239.6 336.5H245.4" stroke="#b2b2b2" stroke-width="1" fill="none"/>
<circle cx="254.5" cy="336.46999999999997" r="5.35" fill="#7a9a6c" stroke="#0c0c0c" stroke-width="1.5"/>
<text x="222.9" y="361.14000000000004" font-size="13" fill="#e6e6e6" text-anchor="end" textLength="65" lengthAdjust="spacingAndGlyphs">Out Color R</text>
<circle cx="254.5" cy="356.24" r="5.35" fill="#7a9a6c" stroke="#0c0c0c" stroke-width="1.5"/>
<text x="222.6" y="380.91" font-size="13" fill="#e6e6e6" text-anchor="end" textLength="65.2" lengthAdjust="spacingAndGlyphs">Out Color G</text>
<circle cx="254.5" cy="376.01" r="5.35" fill="#7a9a6c" stroke="#0c0c0c" stroke-width="1.5"/>
<text x="222" y="400.68" font-size="13" fill="#e6e6e6" text-anchor="end" textLength="63.6" lengthAdjust="spacingAndGlyphs">Out Color B</text>
<circle cx="254.5" cy="395.78" r="5.35" fill="#7a9a6c" stroke="#0c0c0c" stroke-width="1.5"/>
<path d="M242.5 341V396.38M228 356.34000000000003H242.5M228 376.11H242.5M228 395.88H242.5" stroke="#9a9a9a" stroke-width="1" fill="none"/>
<circle cx="100.7" cy="415.54999999999995" r="5.35" fill="#7a9a6c" stroke="#0c0c0c" stroke-width="1.5"/>
<rect x="107.5" y="411.5" width="9" height="8" fill="#000" fill-opacity="0.07" stroke="#8a8a8a" stroke-width="1"/>
<path d="M109 415.5H115.2M111.5 413V419.2" stroke="#a6a6a6" stroke-width="1" fill="none"/>
<text x="119.3" y="420.75" font-size="13" fill="#e6e6e6" text-anchor="start" textLength="51.3" lengthAdjust="spacingAndGlyphs">Uv Coord</text>
<path d="M260.3 336.5C261.08 336.42 263.30 336.32 265 336C266.70 335.68 267.92 335.73 270.5 334.6C273.08 333.47 277.17 331.63 280.5 329.2C283.83 326.77 287.17 324.00 290.5 320C293.83 316.00 297.55 310.20 300.5 305.2C303.45 300.20 305.28 296.37 308.2 290C311.12 283.63 314.73 274.67 318 267C321.27 259.33 324.88 250.37 327.8 244C330.72 237.63 332.55 233.80 335.5 228.8C338.45 223.80 342.17 218.00 345.5 214C348.83 210.00 352.17 207.23 355.5 204.8C358.83 202.37 362.92 200.53 365.5 199.39999999999998C368.08 198.27 369.30 198.32 371 198C372.70 197.68 374.92 197.58 375.7 197.5" stroke="#d89400" stroke-width="1.7" fill="none"/>
<path d="M260.3 336.5C261.08 336.42 263.30 336.32 265 336C266.70 335.68 267.92 335.73 270.5 334.6C273.08 333.47 277.17 331.63 280.5 329.2C283.83 326.77 287.17 324.00 290.5 320C293.83 316.00 297.55 310.20 300.5 305.2C303.45 300.20 305.28 296.37 308.2 290C311.12 283.63 314.73 274.67 318 267C321.27 259.33 324.88 250.37 327.8 244C330.72 237.63 332.55 233.80 335.5 228.8C338.45 223.80 342.17 218.00 345.5 214C348.83 210.00 352.17 207.23 355.5 204.8C358.83 202.37 362.92 200.53 365.5 199.39999999999998C368.08 198.27 369.30 198.32 371 198C372.70 197.68 374.92 197.58 375.7 197.5" stroke="#f8de16" stroke-width="1.05" fill="none"/>
<path d="M321.2 259.5L314 265.6L322.2 269Z" fill="#f5d812"/>
<path d="M541 178C566 178 578 189 601 196" stroke="#d00000" stroke-width="1.45" fill="none"/>
<text x="386.1" y="132.1" font-size="14" fill="#e6e6e6" text-anchor="start" textLength="52.3" lengthAdjust="spacingAndGlyphs">blinn_iris</text>
<rect x="380.0" y="137.6" width="158.20000000000002" height="420.4" rx="5" fill="none" stroke="#f80000" stroke-width="3.6"/>
<clipPath id="c382"><rect x="382.2" y="139.6" width="153.8" height="380.4" rx="4.5"/></clipPath>
<g clip-path="url(#c382)">
<rect x="382.2" y="139.6" width="153.8" height="380.4" fill="#555555"/>
<rect x="382.2" y="188" width="152.5" height="20" fill="#626262"/>
<rect x="382.2" y="228" width="152.5" height="19" fill="#626262"/>
<rect x="382.2" y="267" width="152.5" height="20" fill="#626262"/>
<rect x="382.2" y="306" width="152.5" height="20" fill="#626262"/>
<rect x="382.2" y="346" width="152.5" height="20" fill="#626262"/>
<rect x="382.2" y="385" width="152.5" height="20" fill="#626262"/>
<rect x="382.2" y="425" width="152.5" height="19" fill="#626262"/>
<rect x="382.2" y="464" width="152.5" height="20" fill="#626262"/>
</g>
<rect x="382.2" y="139.6" width="153.8" height="380.4" rx="4.5" fill="none" stroke="#161616" stroke-width="1.3"/>
<rect x="396" y="142" width="24" height="24" fill="#363636"/>
<radialGradient id="sp" cx="0.46" cy="0.4" r="0.6"><stop offset="0" stop-color="#ffffff"/><stop offset="0.18" stop-color="#e4ece4"/><stop offset="0.45" stop-color="#9c9c9c"/><stop offset="0.75" stop-color="#545454"/><stop offset="1" stop-color="#1e1e1e"/></radialGradient>
<filter id="bl" x="-0.3" y="-0.3" width="1.6" height="1.6"><feGaussianBlur stdDeviation="0.7"/></filter>
<clipPath id="spc"><circle cx="408" cy="153.6" r="9.1"/></clipPath>
<circle cx="408" cy="153.6" r="9.1" fill="url(#sp)"/>
<g clip-path="url(#spc)" filter="url(#bl)">
<ellipse cx="408.6" cy="157.6" rx="3.2" ry="1.9" fill="#1c1c1c" opacity="0.8"/>
<ellipse cx="402.3" cy="152.8" rx="1.4" ry="2.6" fill="#222" opacity="0.6"/>
<ellipse cx="413.6" cy="149.6" rx="1.6" ry="1.4" fill="#222" opacity="0.5"/>
<ellipse cx="404.4" cy="148.2" rx="1.6" ry="1" fill="#2a2a2a" opacity="0.45"/>
<ellipse cx="403.6" cy="157.6" rx="1.6" ry="1.4" fill="#c8c8c8" opacity="0.55"/>
<ellipse cx="413" cy="155.6" rx="1.5" ry="2" fill="#c4c4c4" opacity="0.55"/>
<ellipse cx="410" cy="147" rx="2.2" ry="1.1" fill="#d8d8d8" opacity="0.5"/>
<ellipse cx="409" cy="161" rx="2.4" ry="0.9" fill="#8a8a8a" opacity="0.5"/>
</g>
<circle cx="492.5" cy="153.5" r="7.4" fill="#b9b9b9"/>
<text x="492.5" y="157.2" font-size="10.8" font-weight="bold" fill="#4e4e4e" stroke="#4e4e4e" stroke-width="0.35" text-anchor="middle">S</text>
<rect x="507.6" y="146.6" width="14.3" height="3.4" rx="1.7" fill="#6f6f6f" stroke="#cac6d2" stroke-width="1.2"/>
<rect x="507.6" y="151.79999999999998" width="14.3" height="3.4" rx="1.7" fill="#86938a" stroke="#cac6d2" stroke-width="1.2"/>
<rect x="507.6" y="157.0" width="14.3" height="3.4" rx="1.7" fill="#6f6f6f" stroke="#cac6d2" stroke-width="1.2"/>
<circle cx="382" cy="154.5" r="7" fill="#7a9a6c" stroke="#111" stroke-width="1.4"/>
<circle cx="535.7" cy="154" r="7" fill="#f80000" stroke="#111" stroke-width="1.4"/>
<text x="517.6" y="183.3" font-size="13" fill="#e6e6e6" text-anchor="end" textLength="53" lengthAdjust="spacingAndGlyphs">Out Color</text>
<rect x="519.5" y="174.0" width="9" height="8.5" fill="#000" fill-opacity="0.07" stroke="#8a8a8a" stroke-width="1"/>
<path d="M521 178.5H527.2M523.5 175.5V182.2" stroke="#a6a6a6" stroke-width="1" fill="none"/>
<circle cx="535.7" cy="178.1" r="5.35" fill="#f80000" stroke="#0c0c0c" stroke-width="1.5"/>
<text x="400.7" y="202.6" font-size="13" fill="#e6e6e6" text-anchor="start" textLength="29.2" lengthAdjust="spacingAndGlyphs">Color</text>
<rect x="388.5" y="193.5" width="9" height="9" fill="#000" fill-opacity="0.07" stroke="#8a8a8a" stroke-width="1"/>
<path d="M389.6 197.5H396.4" stroke="#b2b2b2" stroke-width="1" fill="none"/>
<text x="414" y="222.6" font-size="13" fill="#e6e6e6" text-anchor="start" textLength="41" lengthAdjust="spacingAndGlyphs">Color R</text>
<text x="414" y="242.1" font-size="13" fill="#e6e6e6" text-anchor="start" textLength="42" lengthAdjust="spacingAndGlyphs">Color G</text>
<text x="414" y="261.6" font-size="13" fill="#e6e6e6" text-anchor="start" textLength="40.5" lengthAdjust="spacingAndGlyphs">Color B</text>
<text x="400.7" y="281.6" font-size="13" fill="#e6e6e6" text-anchor="start" textLength="79.3" lengthAdjust="spacingAndGlyphs">Ambient Color</text>
<rect x="388.5" y="273.1" width="9" height="8" fill="#000" fill-opacity="0.07" stroke="#8a8a8a" stroke-width="1"/>
<path d="M390 277.5H396.2M393.5 274.6V280.8" stroke="#a6a6a6" stroke-width="1" fill="none"/>
<text x="400.7" y="301.1" font-size="13" fill="#e6e6e6" text-anchor="start" textLength="78.7" lengthAdjust="spacingAndGlyphs">Incandescence</text>
<rect x="388.5" y="292.6" width="9" height="8" fill="#000" fill-opacity="0.07" stroke="#8a8a8a" stroke-width="1"/>
<path d="M390 296.5H396.2M393.5 294.1V300.3" stroke="#a6a6a6" stroke-width="1" fill="none"/>
<text x="400.7" y="320.6" font-size="13" fill="#e6e6e6" text-anchor="start" textLength="77" lengthAdjust="spacingAndGlyphs">Matte Opacity</text>
<text x="400.7" y="340.6" font-size="13" fill="#e6e6e6" text-anchor="start" textLength="37" lengthAdjust="spacingAndGlyphs">Diffuse</text>
<text x="400.7" y="360.6" font-size="13" fill="#e6e6e6" text-anchor="start" textLength="85.2" lengthAdjust="spacingAndGlyphs">Normal Camera</text>
<rect x="388.5" y="352.1" width="9" height="8" fill="#000" fill-opacity="0.07" stroke="#8a8a8a" stroke-width="1"/>
<path d="M390 356.5H396.2M393.5 353.6V359.8" stroke="#a6a6a6" stroke-width="1" fill="none"/>
<text x="400.7" y="380.1" font-size="13" fill="#e6e6e6" text-anchor="start" textLength="58.5" lengthAdjust="spacingAndGlyphs">Reflectivity</text>
<text x="400.7" y="399.6" font-size="13" fill="#e6e6e6" text-anchor="start" textLength="83.4" lengthAdjust="spacingAndGlyphs">Reflected Color</text>
<rect x="388.5" y="391.1" width="9" height="8" fill="#000" fill-opacity="0.07" stroke="#8a8a8a" stroke-width="1"/>
<path d="M390 395.5H396.2M393.5 392.6V398.8" stroke="#a6a6a6" stroke-width="1" fill="none"/>
<text x="400.7" y="419.6" font-size="13" fill="#e6e6e6" text-anchor="start" textLength="60.7" lengthAdjust="spacingAndGlyphs">Eccentricity</text>
<text x="400.7" y="439.1" font-size="13" fill="#e6e6e6" text-anchor="start" textLength="78.7" lengthAdjust="spacingAndGlyphs">Specular Color</text>
<rect x="388.5" y="430.6" width="9" height="8" fill="#000" fill-opacity="0.07" stroke="#8a8a8a" stroke-width="1"/>
<path d="M390 434.5H396.2M393.5 432.1V438.3" stroke="#a6a6a6" stroke-width="1" fill="none"/>
<text x="400.7" y="458.6" font-size="13" fill="#e6e6e6" text-anchor="start" textLength="68.8" lengthAdjust="spacingAndGlyphs">Translucence</text>
<path d="M393.5 203.5V257.5M393.5 218.0H407M393.5 237.5H407M393.5 257.0H407" stroke="#9a9a9a" stroke-width="1" fill="none"/>
<circle cx="382" cy="197.9" r="5.35" fill="#f80000" stroke="#0c0c0c" stroke-width="1.5"/>
<circle cx="382" cy="217.9" r="5.35" fill="#7a9a6c" stroke="#0c0c0c" stroke-width="1.5"/>
<circle cx="382" cy="237.4" r="5.35" fill="#7a9a6c" stroke="#0c0c0c" stroke-width="1.5"/>
<circle cx="382" cy="256.9" r="5.35" fill="#7a9a6c" stroke="#0c0c0c" stroke-width="1.5"/>
<circle cx="382" cy="276.9" r="5.35" fill="#f80000" stroke="#0c0c0c" stroke-width="1.5"/>
<circle cx="382" cy="296.4" r="5.35" fill="#f80000" stroke="#0c0c0c" stroke-width="1.5"/>
<circle cx="382" cy="315.9" r="5.35" fill="#7a9a6c" stroke="#0c0c0c" stroke-width="1.5"/>
<circle cx="382" cy="335.9" r="5.35" fill="#7a9a6c" stroke="#0c0c0c" stroke-width="1.5"/>
<circle cx="382" cy="355.9" r="5.35" fill="#7a9a6c" stroke="#0c0c0c" stroke-width="1.5"/>
<circle cx="382" cy="375.4" r="5.35" fill="#7a9a6c" stroke="#0c0c0c" stroke-width="1.5"/>
<circle cx="382" cy="394.9" r="5.35" fill="#f80000" stroke="#0c0c0c" stroke-width="1.5"/>
<circle cx="382" cy="414.9" r="5.35" fill="#7a9a6c" stroke="#0c0c0c" stroke-width="1.5"/>
<circle cx="382" cy="434.4" r="5.35" fill="#f80000" stroke="#0c0c0c" stroke-width="1.5"/>
<circle cx="382" cy="453.9" r="5.35" fill="#7a9a6c" stroke="#0c0c0c" stroke-width="1.5"/>
</g>
<path d="M331.5 327.5V344.2L335.3 340.7L338.3 347.3L340.9 346.1L337.9 339.6H343.2Z" fill="#f8f8f8" stroke="#0a0a0a" stroke-width="1"/>
<rect x="0" y="466" width="640" height="2" fill="#474747"/>
<rect x="0" y="468" width="640" height="12" fill="#333333"/>
</svg></body></html>
